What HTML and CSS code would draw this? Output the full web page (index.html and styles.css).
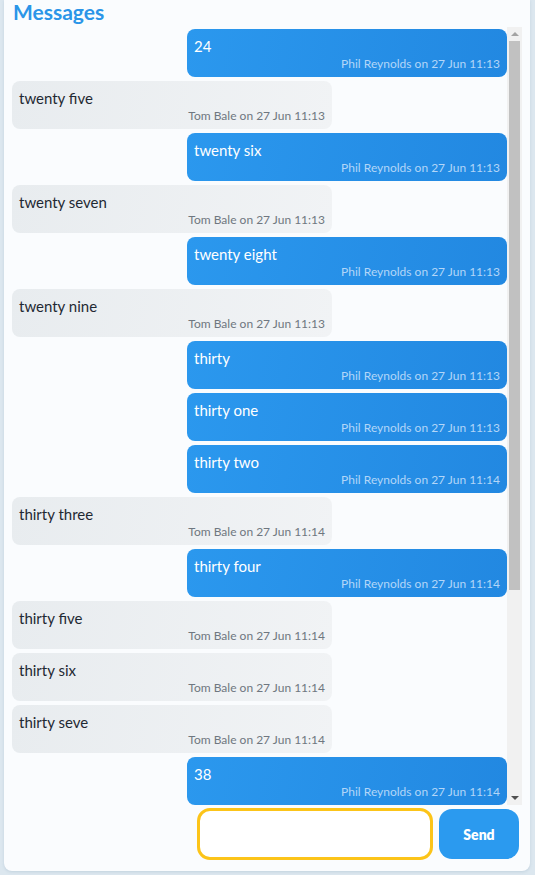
FILE: index.html
```html
<!DOCTYPE html>
<html>
<head>
<meta charset="utf-8">
<link rel="stylesheet" href="styles.css">
</head>
<body>
<div class="card">
  <h2 class="title">Messages</h2>
  <div class="scroll">
    <div class="messages">
      <div class="msg mine"><div class="text">24</div><div class="meta">Phil Reynolds on 27 Jun 11:13</div></div>
      <div class="msg theirs"><div class="text">twenty five</div><div class="meta">Tom Bale on 27 Jun 11:13</div></div>
      <div class="msg mine"><div class="text">twenty six</div><div class="meta">Phil Reynolds on 27 Jun 11:13</div></div>
      <div class="msg theirs"><div class="text">twenty seven</div><div class="meta">Tom Bale on 27 Jun 11:13</div></div>
      <div class="msg mine"><div class="text">twenty eight</div><div class="meta">Phil Reynolds on 27 Jun 11:13</div></div>
      <div class="msg theirs"><div class="text">twenty nine</div><div class="meta">Tom Bale on 27 Jun 11:13</div></div>
      <div class="msg mine"><div class="text">thirty</div><div class="meta">Phil Reynolds on 27 Jun 11:13</div></div>
      <div class="msg mine"><div class="text">thirty one</div><div class="meta">Phil Reynolds on 27 Jun 11:13</div></div>
      <div class="msg mine"><div class="text">thirty two</div><div class="meta">Phil Reynolds on 27 Jun 11:14</div></div>
      <div class="msg theirs"><div class="text">thirty three</div><div class="meta">Tom Bale on 27 Jun 11:14</div></div>
      <div class="msg mine"><div class="text">thirty four</div><div class="meta">Phil Reynolds on 27 Jun 11:14</div></div>
      <div class="msg theirs"><div class="text">thirty five</div><div class="meta">Tom Bale on 27 Jun 11:14</div></div>
      <div class="msg theirs"><div class="text">thirty six</div><div class="meta">Tom Bale on 27 Jun 11:14</div></div>
      <div class="msg theirs"><div class="text">thirty seve</div><div class="meta">Tom Bale on 27 Jun 11:14</div></div>
      <div class="msg mine"><div class="text">38</div><div class="meta">Phil Reynolds on 27 Jun 11:14</div></div>
    </div>
    <div class="scrollbar">
      <div class="sb-btn"><svg width="8" height="4" viewBox="0 0 8 4"><polygon points="0,4 8,4 4,0" fill="#a3a3a3"/></svg></div>
      <div class="sb-track"><div class="sb-thumb"></div></div>
      <div class="sb-btn"><svg width="8" height="4" viewBox="0 0 8 4"><polygon points="0,0 8,0 4,4" fill="#505050"/></svg></div>
    </div>
  </div>
  <div class="composer">
    <textarea class="input" aria-label="Message"></textarea>
    <button class="send">Send</button>
  </div>
</div>
</body>
</html>
```
FILE: styles.css
```css
html, body {
  margin: 0;
  padding: 0;
}
body {
  background: #dce7ef;
  font-family: Lato, "Open Sans", sans-serif;
  height: 875px;
  overflow: hidden;
}
.card {
  margin: 0 5px 0 4px;
  background: #fafcfe;
  border-radius: 0 0 8px 8px;
  padding: 0 8px 11px 8px;
  display: flex;
  flex-direction: column;
  box-shadow: 0 1px 3px rgba(120, 150, 175, 0.25);
}
.title {
  margin: 0;
  padding-left: 1px;
  font-size: 21px;
  line-height: 24px;
  font-weight: 700;
  color: #2b95e8;
  height: 27px;
}
.scroll {
  display: flex;
  height: 778px;
}
.messages {
  flex: 1;
  overflow: hidden;
  display: flex;
  flex-direction: column;
  gap: 4px;
  padding-top: 2px;
}
.scrollbar {
  width: 15px;
  flex: none;
  background: #f1f1f1;
  display: flex;
  flex-direction: column;
}
.sb-btn {
  height: 14px;
  flex: none;
  display: flex;
  align-items: center;
  justify-content: center;
}
.sb-btn svg {
  display: block;
}
.sb-track {
  flex: 1;
  padding: 0 2px;
}
.sb-thumb {
  height: 549px;
  background: #c1c1c1;
}
.msg {
  width: 320px;
  flex: none;
  box-sizing: border-box;
  padding: 7px 7px 6px 7px;
  border-radius: 8px;
}
.mine {
  align-self: flex-end;
  background: linear-gradient(100deg, #2b98ee, #2288e1);
  color: #ffffff;
}
.theirs {
  align-self: flex-start;
  background: linear-gradient(100deg, #e8ecef, #f1f3f5);
  color: #1f2933;
}
.text {
  font-size: 15px;
  line-height: 20px;
}
.meta {
  font-size: 12px;
  line-height: 15px;
  text-align: right;
}
.mine .meta {
  color: #b2d6f8;
}
.theirs .meta {
  color: #6f7780;
}
.composer {
  display: flex;
  justify-content: flex-end;
  align-items: center;
  gap: 6px;
  margin-top: 3px;
  padding-right: 3px;
}
.input {
  width: 236px;
  height: 52px;
  box-sizing: border-box;
  border: 3px solid #fcc419;
  border-radius: 13px;
  background: #ffffff;
  resize: none;
  outline: none;
  margin: 0;
}
.send {
  width: 80px;
  height: 50px;
  border: none;
  border-radius: 13px;
  background: #2b9aef;
  color: #ffffff;
  font-family: Lato, "Open Sans", sans-serif;
  font-weight: 800;
  font-size: 14px;
  margin: 0;
}
```
